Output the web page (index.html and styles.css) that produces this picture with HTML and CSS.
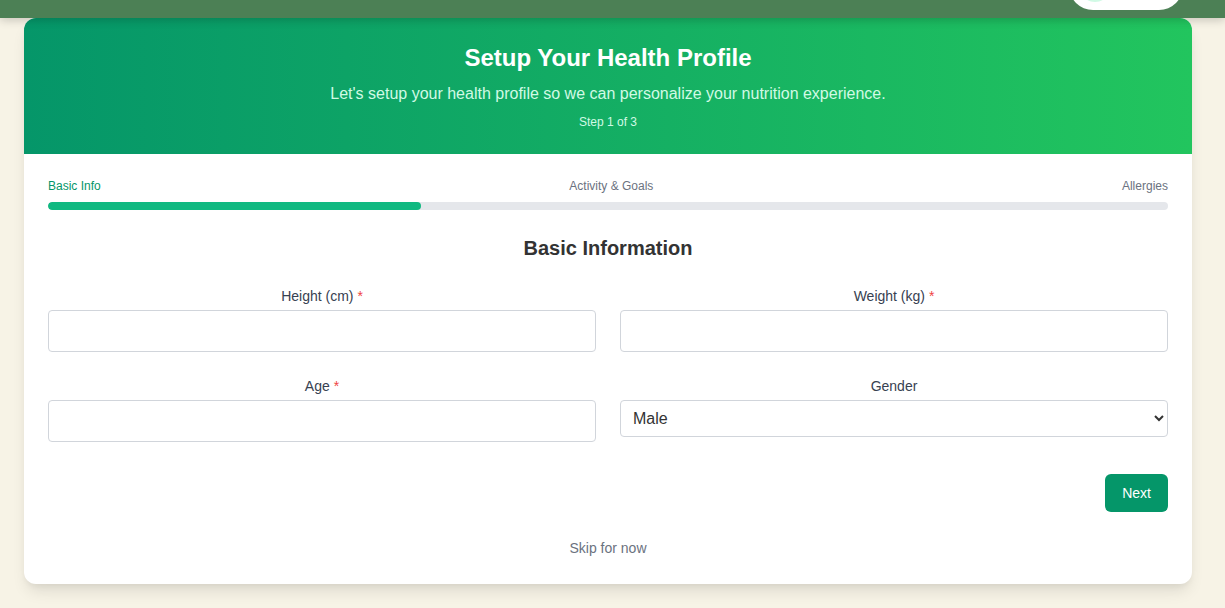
FILE: index.html
```html
<!DOCTYPE html>
<html lang="en">
<head>
<meta charset="utf-8">
<meta name="viewport" content="width=device-width, initial-scale=1">
<title>Setup Your Health Profile</title>
<link rel="stylesheet" href="styles.css">
</head>
<body>
<header class="topbar">
  <div class="account"><span class="avatar"></span></div>
</header>
<main class="page">
  <section class="card">
    <div class="banner">
      <h1 class="banner-title">Setup Your Health Profile</h1>
      <p class="banner-text">Let's setup your health profile so we can personalize your nutrition experience.</p>
      <p class="banner-step">Step 1 of 3</p>
    </div>
    <form class="content">
      <div class="steps">
        <span class="step-current">Basic Info</span>
        <span>Activity &amp; Goals</span>
        <span>Allergies</span>
      </div>
      <div class="track"><div class="track-fill" style="width: 33.33%"></div></div>
      <h2 class="section-title">Basic Information</h2>
      <div class="fields">
        <div class="field">
          <label class="label" for="height">Height (cm) <span class="required">*</span></label>
          <input class="control" id="height" type="number">
        </div>
        <div class="field">
          <label class="label" for="weight">Weight (kg) <span class="required">*</span></label>
          <input class="control" id="weight" type="number">
        </div>
        <div class="field">
          <label class="label" for="age">Age <span class="required">*</span></label>
          <input class="control" id="age" type="number">
        </div>
        <div class="field">
          <label class="label" for="gender">Gender</label>
          <select class="control control-select" id="gender">
            <option>Male</option>
            <option>Female</option>
            <option>Other</option>
          </select>
        </div>
      </div>
      <div class="actions"><button class="next" type="button">Next</button></div>
      <div class="skip-row"><button class="skip" type="button">Skip for now</button></div>
    </form>
  </section>
</main>
</body>
</html>
```

FILE: styles.css
```css
* {
  box-sizing: border-box;
}

body {
  margin: 0;
  min-height: 100vh;
  background: #f7f3e6;
  color: #333;
  font-family: "Liberation Sans", Arial, sans-serif;
  font-size: 16px;
  line-height: 24px;
}

h1, h2, p {
  margin: 0;
}

button, input, select {
  font-family: inherit;
}

.topbar {
  position: relative;
  z-index: 1;
  display: flex;
  justify-content: flex-end;
  align-items: flex-end;
  height: 18px;
  padding: 0 42px 8px;
  overflow: hidden;
  background: #4c8055;
  box-shadow: 0 2px 10px rgba(0, 0, 0, 0.2);
}

.account {
  flex: none;
  width: 114px;
  padding: 8px 10px;
  border-radius: 24px;
  background: #fff;
}

.avatar {
  display: block;
  width: 32px;
  height: 32px;
  border-radius: 50%;
  background: #d1fae5;
}

.page {
  padding: 0 33px 24px 24px;
}

.card {
  overflow: hidden;
  border-radius: 12px;
  background: #fff;
  box-shadow: 0 10px 15px -3px rgba(0, 0, 0, 0.1), 0 4px 6px -2px rgba(0, 0, 0, 0.05);
  text-align: center;
}

.banner {
  display: flex;
  flex-direction: column;
  gap: 8px;
  padding: 24px;
  background: linear-gradient(to right, #059669, #22c55e);
  color: #d1fae5;
}

.banner-title {
  color: #fff;
  font-size: 24px;
  line-height: 32px;
}

.banner-step {
  font-size: 12px;
  line-height: 16px;
}

.content {
  padding: 24px;
}

.steps {
  display: flex;
  justify-content: space-between;
  margin-bottom: 8px;
  color: #6b7280;
  font-size: 12px;
  line-height: 16px;
}

.step-current {
  color: #059669;
}

.track {
  height: 8px;
  margin-bottom: 24px;
  overflow: hidden;
  border-radius: 4px;
  background: #e5e7eb;
}

.track-fill {
  height: 100%;
  border-radius: 4px;
  background: #10b981;
}

.section-title {
  margin-bottom: 24px;
  font-size: 20px;
  line-height: 28px;
}

.fields {
  display: grid;
  grid-template-columns: repeat(2, minmax(0, 1fr));
  gap: 24px;
}

.label {
  display: block;
  margin-bottom: 4px;
  color: #374151;
  font-size: 14px;
  line-height: 20px;
}

.required {
  color: #ef4444;
}

.control {
  display: block;
  width: 100%;
  padding: 8px 12px;
  border: 1px solid #d1d5db;
  border-radius: 4px;
  background: #fff;
  color: #333;
  font-size: 16px;
  line-height: 24px;
}

input.control {
  height: 42px;
}

.control-select {
  height: 37px;
  padding: 8px;
}

.actions {
  display: flex;
  justify-content: flex-end;
  margin-top: 32px;
}

.next {
  padding: 9px 17px;
  border: 0;
  border-radius: 6px;
  background: #059669;
  color: #fff;
  font-size: 14px;
  line-height: 20px;
}

.skip-row {
  display: flex;
  justify-content: center;
  margin-top: 24px;
}

.skip {
  padding: 0;
  border: 0;
  background: none;
  color: #6b7280;
  font-size: 14px;
  line-height: 24px;
}
```
